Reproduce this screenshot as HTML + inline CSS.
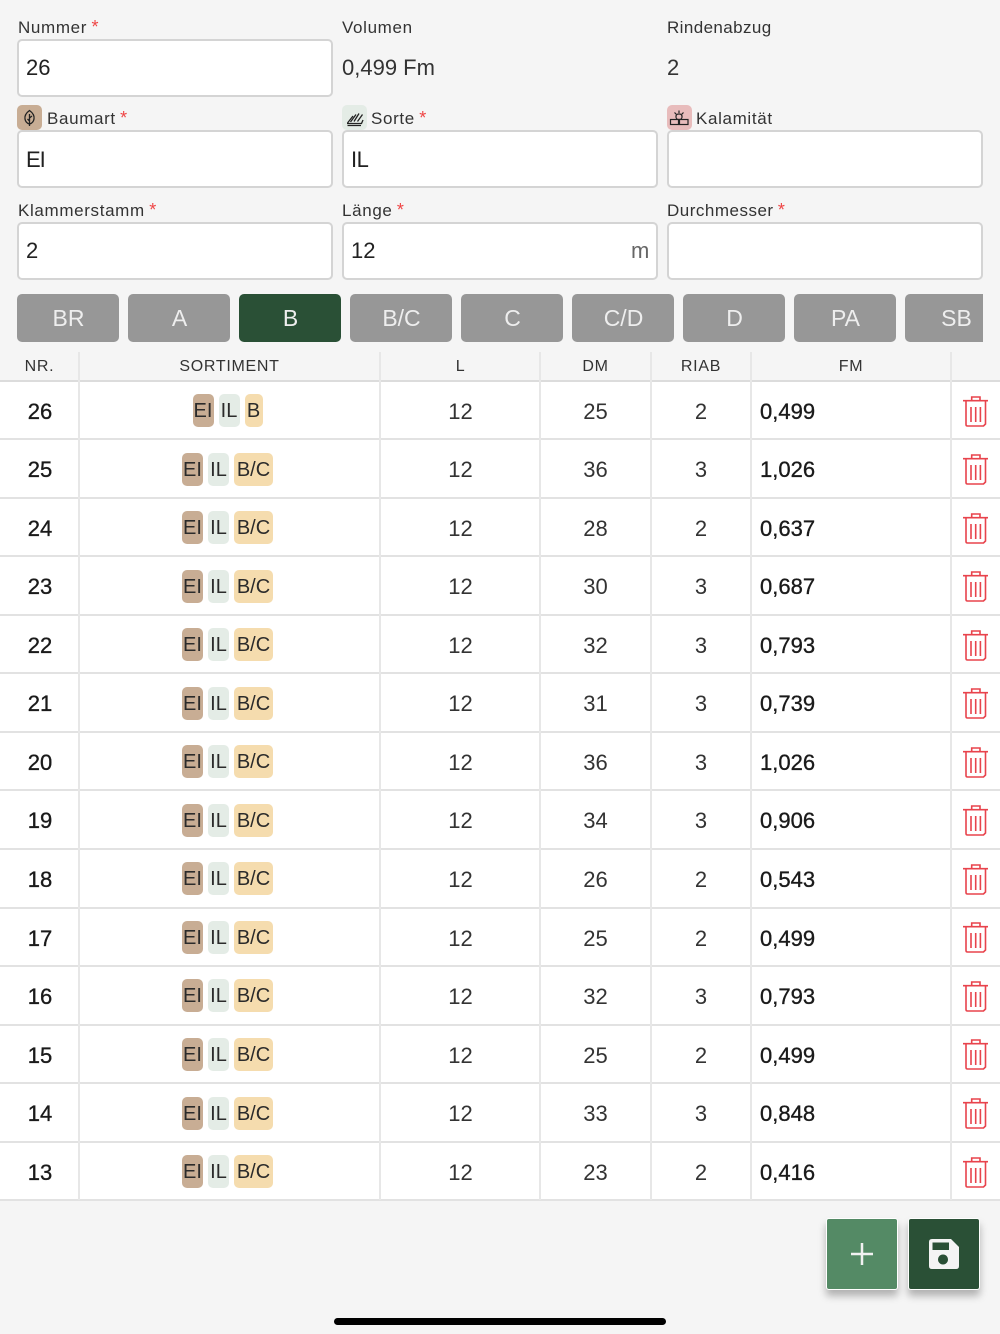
<!DOCTYPE html>
<html lang="de"><head><meta charset="utf-8"><title>Erfassung</title>
<style>
html,body{margin:0;padding:0;background:#f5f5f5}
body{width:1000px;height:1334px;position:relative;overflow:hidden;font-family:"Liberation Sans",sans-serif;color:#212121}
.a{position:absolute}
.lb{position:absolute;font-size:17px;line-height:20px;letter-spacing:.65px;color:#333;white-space:nowrap}
.lb i{font-style:normal;color:#ef4444;margin-left:-1px;font-size:18px;line-height:0}
.in{position:absolute;box-sizing:border-box;width:316px;height:58px;background:#fff;border:2px solid #d4d4d4;border-radius:5px;font-size:22px;line-height:54px;color:#212121}
.in span{position:absolute;left:7px;top:0}
.pl{position:absolute;font-size:22px;line-height:26px;color:#333}
.ic{position:absolute;width:25px;height:25px;border-radius:5px;top:105px}
.b{position:absolute;top:294px;width:102px;height:48px;border-radius:5px;background:#979797;color:#eee;font-size:23px;line-height:49px;text-align:center;text-indent:1px}
.h{position:absolute;top:352px;height:28px;line-height:29px;font-size:16px;letter-spacing:.7px;color:#333;text-align:center}
.v{position:absolute;width:2px;background:#e7e7e7}
.r{position:absolute;left:0;width:1000px;height:56.54px;background:#fff;border-bottom:2px solid #e2e2e2;margin-top:-.3px}
.r div{position:absolute;top:0;height:56.54px;line-height:59px;text-align:center;font-size:22px;color:#333}
.r .n{left:0;width:80px;color:#1a1a1a;-webkit-text-stroke:.35px #1a1a1a}
.r .l{left:381px;width:159px}
.r .d{left:541px;width:109px}
.r .q{left:651px;width:100px}
.r .f{left:760px;width:150px;text-align:left;color:#1a1a1a;-webkit-text-stroke:.35px #1a1a1a}
.r .s{left:80px;top:.6px;width:299px;display:flex;justify-content:center;align-items:center;gap:5px;line-height:normal;transform:translateX(-2px)}
.r .s span{display:block;height:33px;line-height:34px;border-radius:5px;font-size:20px;text-align:center;color:#2b2b2b}
.e{background:#c8ad94;width:21px}.il{background:#e4ece6;width:21px}.c{background:#f5dcae;width:39px}
.r .s .o{width:18px}
.r svg{position:absolute;left:963px;top:13.8px}
</style></head><body>
<svg width="0" height="0" style="position:absolute"><defs>
<symbol id="t" viewBox="0 0 26 32"><g fill="none" stroke="#e8434c" stroke-width="1.6"><path d="M0 4.700H25"/><path d="M8.700 4.700V1H17V4.700"/><path d="M3 4.700V28.500Q3 30 4.500 30H20.500L22.500 28V4.700"/><path d="M8 11V26M12.700 11V26M17.400 11V26"/></g></symbol>
</defs></svg>

<div class="lb" style="left:18px;top:18px">Nummer <i>*</i></div>
<div class="in" style="left:17px;top:39px"><span>26</span></div>
<div class="lb" style="left:342px;top:18px">Volumen</div>
<div class="pl" style="left:342px;top:55px">0,499 Fm</div>
<div class="lb" style="left:667px;top:18px;letter-spacing:.4px">Rindenabzug</div>
<div class="pl" style="left:667px;top:55px">2</div>

<div class="ic" style="left:17px;background:#c8ad94"><svg width="25" height="25" viewBox="0 0 25 25" fill="none" stroke="#222" stroke-width="1.3"><path d="M12.500 5.500C9 8 7.500 11 8 14C8.500 17 10.500 18.500 12.500 19C14.500 18.500 16.500 17 17 14C17.500 11 16 8 12.500 5.500Z"/><path d="M12.500 9V21M12.500 13L15 11M12.500 16L10.500 14"/></svg></div>
<div class="lb" style="left:47px;top:109px">Baumart <i>*</i></div>
<div class="in" style="left:17px;top:130px"><span style="top:1px;letter-spacing:-1px">EI</span></div>
<div class="ic" style="left:342px;background:#e4ece6"><svg width="25" height="25" viewBox="0 0 25 25" fill="none" stroke="#222" stroke-width="1.3"><path d="M5 18.500L19.500 18.500L21 15M5.500 20.500H19"/><path d="M5.500 18L11 11M8.500 17L14 9.500M12 16.500L17 8.500M15.500 16.500L20.500 9.500"/></svg></div>
<div class="lb" style="left:371px;top:109px">Sorte <i>*</i></div>
<div class="in" style="left:342px;top:130px"><span style="top:1px;letter-spacing:-.5px">IL</span></div>
<div class="ic" style="left:667px;background:#e8bcbc"><svg width="25" height="25" viewBox="0 0 25 25" fill="none" stroke="#222" stroke-width="1.2"><rect x="3.500" y="14.500" width="8" height="5"/><rect x="12.500" y="14.500" width="8.500" height="5"/><rect x="9" y="9" width="6" height="5.500" rx="2.500"/><path d="M12 5.500V8M7.500 7.500L9.300 9.300M16.500 7.500L14.700 9.300"/></svg></div>
<div class="lb" style="left:696px;top:109px">Kalamität</div>
<div class="in" style="left:667px;top:130px"></div>

<div class="lb" style="left:18px;top:201px">Klammerstamm <i>*</i></div>
<div class="in" style="left:17px;top:222px"><span>2</span></div>
<div class="lb" style="left:342px;top:201px">Länge <i>*</i></div>
<div class="in" style="left:342px;top:222px"><span>12</span><span style="left:287px;color:#666">m</span></div>
<div class="lb" style="left:667px;top:201px;letter-spacing:.5px">Durchmesser <i>*</i></div>
<div class="in" style="left:667px;top:222px"></div>

<div class="b" style="left:17px">BR</div>
<div class="b" style="left:128px">A</div>
<div class="b" style="left:239px;background:#2a5036">B</div>
<div class="b" style="left:350px">B/C</div>
<div class="b" style="left:461px">C</div>
<div class="b" style="left:572px">C/D</div>
<div class="b" style="left:683px">D</div>
<div class="b" style="left:794px">PA</div>
<div class="a" style="left:905px;top:294px;width:78px;height:48px;overflow:hidden"><div class="b" style="left:0;top:0">SB</div></div>

<div class="h" style="left:0;width:79px">NR.</div>
<div class="h" style="left:80px;width:299px">SORTIMENT</div>
<div class="h" style="left:381px;width:159px">L</div>
<div class="h" style="left:541px;width:109px">DM</div>
<div class="h" style="left:651px;width:100px">RIAB</div>
<div class="h" style="left:751px;width:200px">FM</div>
<div class="a" style="left:0;top:380px;width:1000px;height:2px;background:#dcdcdc"></div>

<div class="r" style="top:382px"><div class="n">26</div><div class="s"><span class="e">EI</span><span class="il">IL</span><span class="c o">B</span></div><div class="l">12</div><div class="d">25</div><div class="q">2</div><div class="f">0,499</div><svg width="26" height="32"><use href="#t"/></svg></div>
<div class="r" style="top:440.54px"><div class="n">25</div><div class="s"><span class="e">EI</span><span class="il">IL</span><span class="c">B/C</span></div><div class="l">12</div><div class="d">36</div><div class="q">3</div><div class="f">1,026</div><svg width="26" height="32"><use href="#t"/></svg></div>
<div class="r" style="top:499.08px"><div class="n">24</div><div class="s"><span class="e">EI</span><span class="il">IL</span><span class="c">B/C</span></div><div class="l">12</div><div class="d">28</div><div class="q">2</div><div class="f">0,637</div><svg width="26" height="32"><use href="#t"/></svg></div>
<div class="r" style="top:557.62px"><div class="n">23</div><div class="s"><span class="e">EI</span><span class="il">IL</span><span class="c">B/C</span></div><div class="l">12</div><div class="d">30</div><div class="q">3</div><div class="f">0,687</div><svg width="26" height="32"><use href="#t"/></svg></div>
<div class="r" style="top:616.16px"><div class="n">22</div><div class="s"><span class="e">EI</span><span class="il">IL</span><span class="c">B/C</span></div><div class="l">12</div><div class="d">32</div><div class="q">3</div><div class="f">0,793</div><svg width="26" height="32"><use href="#t"/></svg></div>
<div class="r" style="top:674.7px"><div class="n">21</div><div class="s"><span class="e">EI</span><span class="il">IL</span><span class="c">B/C</span></div><div class="l">12</div><div class="d">31</div><div class="q">3</div><div class="f">0,739</div><svg width="26" height="32"><use href="#t"/></svg></div>
<div class="r" style="top:733.24px"><div class="n">20</div><div class="s"><span class="e">EI</span><span class="il">IL</span><span class="c">B/C</span></div><div class="l">12</div><div class="d">36</div><div class="q">3</div><div class="f">1,026</div><svg width="26" height="32"><use href="#t"/></svg></div>
<div class="r" style="top:791.78px"><div class="n">19</div><div class="s"><span class="e">EI</span><span class="il">IL</span><span class="c">B/C</span></div><div class="l">12</div><div class="d">34</div><div class="q">3</div><div class="f">0,906</div><svg width="26" height="32"><use href="#t"/></svg></div>
<div class="r" style="top:850.32px"><div class="n">18</div><div class="s"><span class="e">EI</span><span class="il">IL</span><span class="c">B/C</span></div><div class="l">12</div><div class="d">26</div><div class="q">2</div><div class="f">0,543</div><svg width="26" height="32"><use href="#t"/></svg></div>
<div class="r" style="top:908.86px"><div class="n">17</div><div class="s"><span class="e">EI</span><span class="il">IL</span><span class="c">B/C</span></div><div class="l">12</div><div class="d">25</div><div class="q">2</div><div class="f">0,499</div><svg width="26" height="32"><use href="#t"/></svg></div>
<div class="r" style="top:967.4px"><div class="n">16</div><div class="s"><span class="e">EI</span><span class="il">IL</span><span class="c">B/C</span></div><div class="l">12</div><div class="d">32</div><div class="q">3</div><div class="f">0,793</div><svg width="26" height="32"><use href="#t"/></svg></div>
<div class="r" style="top:1025.94px"><div class="n">15</div><div class="s"><span class="e">EI</span><span class="il">IL</span><span class="c">B/C</span></div><div class="l">12</div><div class="d">25</div><div class="q">2</div><div class="f">0,499</div><svg width="26" height="32"><use href="#t"/></svg></div>
<div class="r" style="top:1084.48px"><div class="n">14</div><div class="s"><span class="e">EI</span><span class="il">IL</span><span class="c">B/C</span></div><div class="l">12</div><div class="d">33</div><div class="q">3</div><div class="f">0,848</div><svg width="26" height="32"><use href="#t"/></svg></div>
<div class="r" style="top:1143.02px"><div class="n">13</div><div class="s"><span class="e">EI</span><span class="il">IL</span><span class="c">B/C</span></div><div class="l">12</div><div class="d">23</div><div class="q">2</div><div class="f">0,416</div><svg width="26" height="32"><use href="#t"/></svg></div>

<div class="v" style="left:78px;top:352px;height:848px"></div>
<div class="v" style="left:379px;top:352px;height:848px"></div>
<div class="v" style="left:539px;top:352px;height:848px"></div>
<div class="v" style="left:650px;top:352px;height:848px"></div>
<div class="v" style="left:750px;top:352px;height:848px"></div>
<div class="v" style="left:950px;top:352px;height:848px"></div>

<div class="a" style="left:826px;top:1218px;width:70px;height:70px;border:1px solid #fff;border-radius:3px;background:#548a65;box-shadow:0 6px 8px rgba(0,0,0,.28)">
<svg class="a" style="left:23px;top:23px" width="24" height="24"><path d="M12 1V23M1 12H23" stroke="#f1f1f1" stroke-width="2.500" fill="none"/></svg></div>
<div class="a" style="left:908px;top:1218px;width:70px;height:70px;border:1px solid #fff;border-radius:3px;background:#2a5036;box-shadow:0 6px 8px rgba(0,0,0,.28)">
<svg class="a" style="left:20px;top:20px" width="30" height="30" viewBox="0 0 30 30"><path fill="#f4f4f4" fill-rule="evenodd" d="M3 0H22L30 8V27Q30 30 27 30H3Q0 30 0 27V3Q0 0 3 0ZM3.500 3.500V11H20V3.500ZM14 15.500A5 5 0 1 0 14.010 15.500Z"/></svg></div>

<div class="a" style="left:334px;top:1318px;width:332px;height:7px;border-radius:4px;background:#000"></div>
</body></html>
